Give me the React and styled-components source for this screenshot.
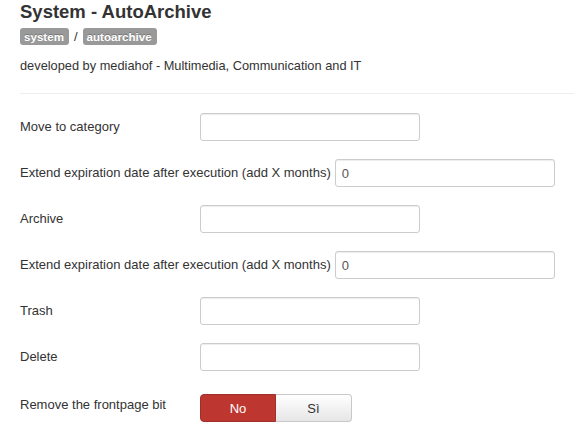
import React from 'react';
import styled, { createGlobalStyle } from 'styled-components';

const GlobalStyle = createGlobalStyle`
  html, body {
    margin: 0;
    padding: 0;
    background: #ffffff;
  }
  body {
    font-family: "Liberation Sans", Arial, sans-serif;
    font-size: 13px;
    line-height: 18px;
    color: #333333;
    overflow: hidden;
  }
`;

const fields = [
  { label: 'Move to category', value: '' },
  { label: 'Extend expiration date after execution (add X months)', value: '0' },
  { label: 'Archive', value: '' },
  { label: 'Extend expiration date after execution (add X months)', value: '0' },
  { label: 'Trash', value: '' },
  { label: 'Delete', value: '' },
];

const App = () => (
  <Page>
    <GlobalStyle />
    <Title>System - AutoArchive</Title>
    <Crumbs>
      <Badge>system</Badge>
      <Slash>/</Slash>
      <Badge>autoarchive</Badge>
    </Crumbs>
    <Description>developed by mediahof - Multimedia, Communication and IT</Description>
    <Rule />
    <Form>
      {fields.map((f, i) => (
        <ControlGroup key={i}>
          <ControlLabel>{f.label}</ControlLabel>
          <TextInput type="text" defaultValue={f.value} />
        </ControlGroup>
      ))}
      <ControlGroup $radio>
        <ControlLabel $radio>Remove the frontpage bit</ControlLabel>
        <Toggle>
          <ToggleButton $active>No</ToggleButton>
          <ToggleButton>Sì</ToggleButton>
        </Toggle>
      </ControlGroup>
    </Form>
  </Page>
);

const Page = styled.div`
  padding: 0 0 0 20px;
`;

const Title = styled.h2`
  margin: 0;
  padding-top: 1px;
  font-size: 18.5px;
  line-height: 22px;
  font-weight: bold;
  color: #333333;
`;

const Crumbs = styled.div`
  display: flex;
  align-items: center;
  margin-top: 5px;
  height: 17px;
`;

const Badge = styled.span`
  display: inline-block;
  background: #999999;
  color: #ffffff;
  font-size: 11.6px;
  font-weight: bold;
  line-height: 14px;
  padding: 2px 5px 1px 4px;
  border-radius: 3px;
  text-shadow: 0 -1px 0 rgba(0, 0, 0, 0.25);
`;

const Slash = styled.span`
  margin: 0 5px 0 5px;
  font-size: 13px;
  color: #333333;
`;

const Description = styled.p`
  margin: 12px 0 0;
  font-size: 12.8px;
  line-height: 18px;
`;

const Rule = styled.hr`
  margin: 18px 0 0;
  border: 0;
  border-top: 1px solid #eeeeee;
  border-bottom: 1px solid #ffffff;
`;

const Form = styled.div`
  padding-top: 18px;
`;

const ControlGroup = styled.div`
  display: flex;
  align-items: flex-start;
  margin-bottom: 18px;
  padding-top: ${(p) => (p.$radio ? '5px' : '0')};
`;

const ControlLabel = styled.label`
  min-width: 180px;
  padding-top: ${(p) => (p.$radio ? '2px' : '5px')};
  padding-right: 4px;
  box-sizing: border-box;
  white-space: nowrap;
  line-height: 18px;
`;

const TextInput = styled.input`
  box-sizing: border-box;
  width: 220px;
  height: 28px;
  padding: 4px 6px;
  font-family: "Liberation Sans", Arial, sans-serif;
  font-size: 13px;
  color: #555555;
  border: 1px solid #cccccc;
  border-radius: 3px;
  background: #ffffff;
  box-shadow: inset 0 1px 1px rgba(0, 0, 0, 0.075);
  outline: none;
`;

const Toggle = styled.div`
  display: flex;
`;

const ToggleButton = styled.button`
  box-sizing: border-box;
  width: 76px;
  height: 28px;
  font-family: "Liberation Sans", Arial, sans-serif;
  font-size: 13px;
  border: 1px solid ${(p) => (p.$active ? '#a0302a' : '#c8c8c8')};
  color: ${(p) => (p.$active ? '#ffffff' : '#333333')};
  background: ${(p) => (p.$active ? '#bd362f' : 'linear-gradient(#ffffff, #e6e6e6)')};
  cursor: pointer;
  padding: 0;

  &:first-child {
    border-radius: 4px 0 0 4px;
  }
  &:last-child {
    border-radius: 0 4px 4px 0;
    border-left: 0;
  }
`;

export default App;
